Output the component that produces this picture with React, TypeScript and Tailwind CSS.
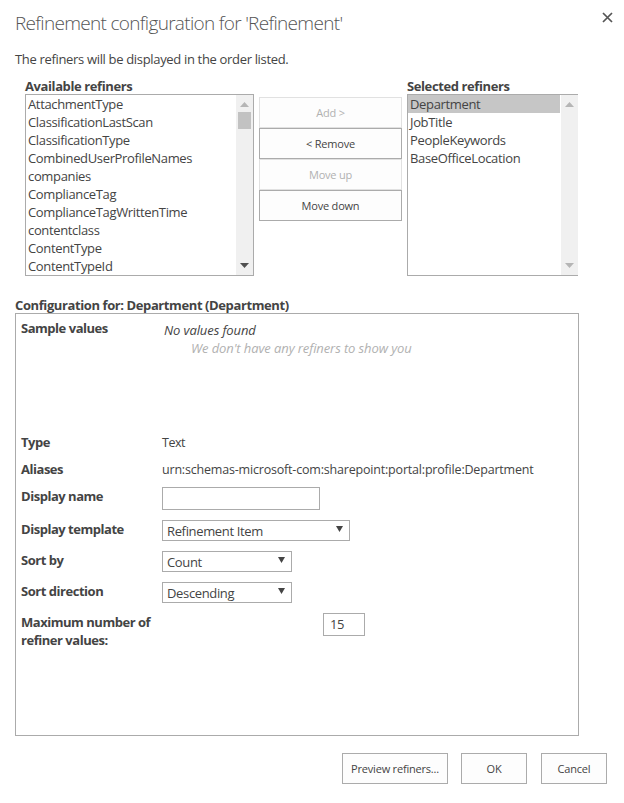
const font = "font-['Open_Sans','Noto_Sans',sans-serif]";

function ListBox({ items, selected, thumb, className }: { items: string[]; selected?: string; thumb?: boolean; className: string }) {
  return (
    <div className={`flex h-[182px] border border-[#ababab] bg-white ${className}`}>
      <ul className="flex-1 min-w-0 overflow-hidden">
        {items.map((it) => (
          <li key={it} className={`h-[18px] pl-[2px] text-[13px] leading-[18px] tracking-[-0.35px] text-[#444] whitespace-nowrap ${it === selected ? "bg-[#c6c6c6] mr-[1px]" : ""}`}>
            {it}
          </li>
        ))}
      </ul>
      <div className="relative w-[17px] shrink-0 bg-[#f0f0f0]">
        <svg className="absolute left-[4px] top-[7px]" width="9" height="5" viewBox="0 0 9 5"><path d="M4.5 0 L9 5 H0 Z" fill="#b5b5b5" /></svg>
        {thumb && <div className="absolute left-[2px] top-[17px] h-[17px] w-[13px] bg-[#c2c2c2]" />}
        <svg className="absolute left-[4px] bottom-[7px]" width="9" height="5" viewBox="0 0 9 5"><path d="M0 0 H9 L4.5 5 Z" fill={thumb ? "#505050" : "#b5b5b5"} /></svg>
      </div>
    </div>
  );
}

function MidButton({ label, disabled }: { label: string; disabled?: boolean }) {
  return (
    <div className={`flex h-[31px] items-center justify-center border bg-[#fdfdfd] pt-[2px] text-[11px] tracking-[-0.2px] ${disabled ? "border-[#e1e1e1] text-[#b1b1b1]" : "border-[#ababab] text-[#444]"}`}>
      {label}
    </div>
  );
}

function Select({ label, className }: { label: string; className: string }) {
  return (
    <div className={`flex h-[21px] items-center justify-between border border-[#ababab] pl-[4px] pr-[6px] text-[13px] tracking-[-0.35px] text-[#444] ${className}`}>
      <span className="pt-[2px]">{label}</span>
      <svg width="7" height="6" viewBox="0 0 7 6" className="mb-[3px]"><path d="M0 0 H7 L3.5 6 Z" fill="#444" /></svg>
    </div>
  );
}

function Label({ children }: { children: React.ReactNode }) {
  return <div className="w-[141px] shrink-0 text-[13px] font-bold leading-[18px] tracking-[-0.47px] text-[#444]">{children}</div>;
}

function FootButton({ label, className }: { label: string; className: string }) {
  return (
    <div className={`flex h-[31px] items-center justify-center border border-[#ababab] bg-[#fdfdfd] pt-[1px] text-[11px] tracking-[-0.2px] text-[#444] ${className}`}>
      {label}
    </div>
  );
}

export default function App() {
  const available = ["AttachmentType", "ClassificationLastScan", "ClassificationType", "CombinedUserProfileNames", "companies", "ComplianceTag", "ComplianceTagWrittenTime", "contentclass", "ContentType", "ContentTypeId"];
  const chosen = ["Department", "JobTitle", "PeopleKeywords", "BaseOfficeLocation"];
  const heading = "h-[16px] text-[13px] font-bold leading-[16px] tracking-[-0.4px] text-[#444]";
  return (
    <div className={`relative h-[803px] w-[624px] overflow-hidden bg-white px-[15px] ${font}`}>
      <svg className="absolute right-[11px] top-[12px]" width="11" height="11" viewBox="0 0 11 11"><path d="M1 1 L10 10 M10 1 L1 10" stroke="#555" strokeWidth="1.7" /></svg>

      <h1 className="pt-[10px] text-[19px] font-light leading-[26px] tracking-[-0.69px] text-[#555]">Refinement configuration for 'Refinement'</h1>
      <p className="mt-[14px] text-[13px] leading-[18px] tracking-[-0.33px] text-[#444]">The refiners will be displayed in the order listed.</p>

      <div className="mt-[10px] flex">
        <div className="ml-[10px] w-[229px]">
          <div className={heading}>Available refiners</div>
          <ListBox items={available} thumb className="w-[229px]" />
        </div>
        <div className="ml-[5px] mt-[19px] w-[143px]">
          <MidButton label="Add >" disabled />
          <MidButton label="< Remove" />
          <MidButton label="Move up" disabled />
          <MidButton label="Move down" />
        </div>
        <div className="ml-[5px] w-[171px]">
          <div className={heading}>Selected refiners</div>
          <ListBox items={chosen} selected="Department" className="w-[171px] border-r-0" />
        </div>
      </div>

      <div className={`mt-[21px] ${heading}`}>Configuration for: Department (Department)</div>

      <div className="h-[423px] w-[564px] border border-[#ababab] px-[5px] pt-[5px]">
        <div className="flex h-[114px]">
          <Label>Sample values</Label>
          <div className="pl-[2px] pt-[2px] text-[13px] italic leading-[18px] tracking-[-0.1px]">
            <div className="text-[#444]">No values found</div>
            <div className="pl-[27px] text-[#b1b1b1]">We don't have any refiners to show you</div>
          </div>
        </div>
        <div className="flex h-[27px] items-start">
          <Label>Type</Label>
          <div className="pt-[1px] text-[12.5px] leading-[18px] tracking-[-0.5px] text-[#444]">Text</div>
        </div>
        <div className="flex h-[27px] items-start">
          <Label>Aliases</Label>
          <div className="pt-[1px] whitespace-nowrap text-[12.5px] leading-[18px] tracking-[-0.19px] text-[#444]">urn:schemas-microsoft-com:sharepoint:portal:profile:Department</div>
        </div>
        <div className="flex h-[33px] items-start">
          <Label>Display name</Label>
          <div className="h-[23px] w-[158px] border border-[#ababab]" />
        </div>
        <div className="flex h-[31px] items-start">
          <Label>Display template</Label>
          <Select label="Refinement Item" className="w-[188px]" />
        </div>
        <div className="flex h-[31px] items-start">
          <Label>Sort by</Label>
          <Select label="Count" className="w-[130px]" />
        </div>
        <div className="flex h-[31px] items-start">
          <Label>Sort direction</Label>
          <Select label="Descending" className="w-[130px]" />
        </div>
        <div className="flex items-start">
          <Label>Maximum number of refiner values:</Label>
          <div className="ml-[161px] flex h-[23px] w-[42px] items-center border border-[#ababab] pl-[6px] text-[13px] tracking-[-0.35px] text-[#444]">15</div>
        </div>
      </div>

      <div className="mt-[17px] flex pl-[327px]">
        <FootButton label="Preview refiners..." className="w-[106px]" />
        <FootButton label="OK" className="ml-[13px] w-[66px]" />
        <FootButton label="Cancel" className="ml-[14px] w-[66px]" />
      </div>
    </div>
  );
}
